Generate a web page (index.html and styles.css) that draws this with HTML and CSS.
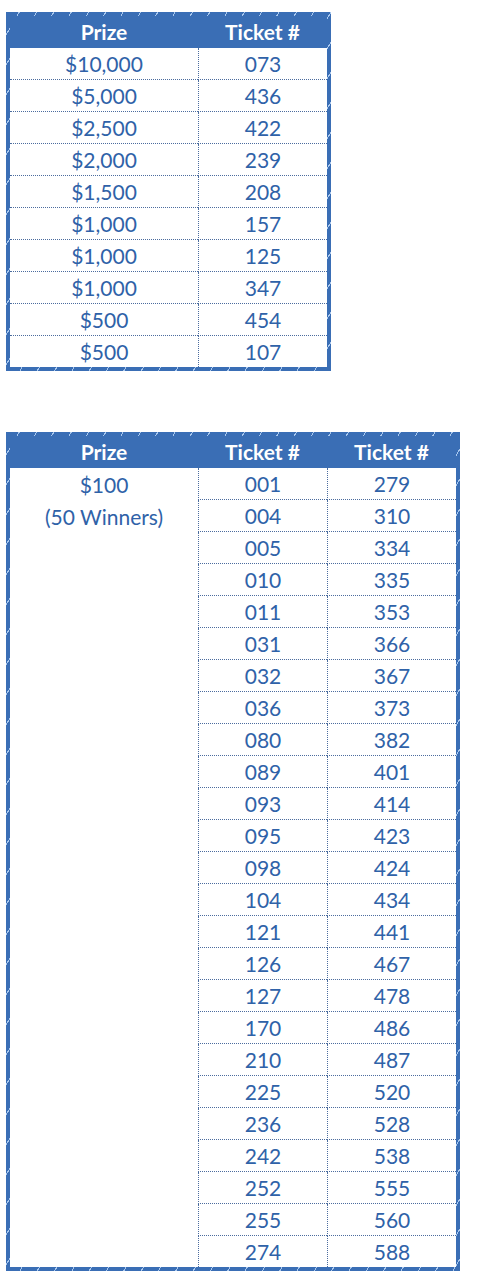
FILE: index.html
```html
<!DOCTYPE html>
<html>
<head>
<meta charset="utf-8">
<link rel="stylesheet" href="styles.css">
</head>
<body>
<div class="page">
  <table class="prizes top">
    <colgroup><col class="c-prize"><col class="c-ticket"></colgroup>
    <thead>
      <tr><th>Prize</th><th>Ticket #</th></tr>
    </thead>
    <tbody>
      <tr><td>$10,000</td><td>073</td></tr>
      <tr><td>$5,000</td><td>436</td></tr>
      <tr><td>$2,500</td><td>422</td></tr>
      <tr><td>$2,000</td><td>239</td></tr>
      <tr><td>$1,500</td><td>208</td></tr>
      <tr><td>$1,000</td><td>157</td></tr>
      <tr><td>$1,000</td><td>125</td></tr>
      <tr><td>$1,000</td><td>347</td></tr>
      <tr><td>$500</td><td>454</td></tr>
      <tr><td>$500</td><td>107</td></tr>
    </tbody>
  </table>

  <table class="prizes bottom">
    <colgroup><col class="c-prize"><col class="c-ticket"><col class="c-ticket"></colgroup>
    <thead>
      <tr><th>Prize</th><th>Ticket #</th><th>Ticket #</th></tr>
    </thead>
    <tbody>
      <tr><td class="p">$100</td><td>001</td><td>279</td></tr>
      <tr><td class="p">(50 Winners)</td><td>004</td><td>310</td></tr>
      <tr><td class="p"></td><td>005</td><td>334</td></tr>
      <tr><td class="p"></td><td>010</td><td>335</td></tr>
      <tr><td class="p"></td><td>011</td><td>353</td></tr>
      <tr><td class="p"></td><td>031</td><td>366</td></tr>
      <tr><td class="p"></td><td>032</td><td>367</td></tr>
      <tr><td class="p"></td><td>036</td><td>373</td></tr>
      <tr><td class="p"></td><td>080</td><td>382</td></tr>
      <tr><td class="p"></td><td>089</td><td>401</td></tr>
      <tr><td class="p"></td><td>093</td><td>414</td></tr>
      <tr><td class="p"></td><td>095</td><td>423</td></tr>
      <tr><td class="p"></td><td>098</td><td>424</td></tr>
      <tr><td class="p"></td><td>104</td><td>434</td></tr>
      <tr><td class="p"></td><td>121</td><td>441</td></tr>
      <tr><td class="p"></td><td>126</td><td>467</td></tr>
      <tr><td class="p"></td><td>127</td><td>478</td></tr>
      <tr><td class="p"></td><td>170</td><td>486</td></tr>
      <tr><td class="p"></td><td>210</td><td>487</td></tr>
      <tr><td class="p"></td><td>225</td><td>520</td></tr>
      <tr><td class="p"></td><td>236</td><td>528</td></tr>
      <tr><td class="p"></td><td>242</td><td>538</td></tr>
      <tr><td class="p"></td><td>252</td><td>555</td></tr>
      <tr><td class="p"></td><td>255</td><td>560</td></tr>
      <tr><td class="p"></td><td>274</td><td>588</td></tr>
    </tbody>
  </table>
</div>
</body>
</html>
```

FILE: styles.css
```css
html, body {
  margin: 0;
  padding: 0;
  background: #ffffff;
}

.page {
  padding: 12px 0 0 6px;
  display: flex;
  flex-direction: column;
  align-items: flex-start;
  gap: 61px;
  font-family: Lato, "Liberation Sans", sans-serif;
}

.prizes {
  border-collapse: separate;
  border-spacing: 0;
  border: 4px solid #3a6eb5;
  border-image-source: repeating-linear-gradient(120deg, #3a6eb5 0 11px, #a9c8ee 11px 12px, #3a6eb5 12px 15px);
  border-image-slice: 4;
  border-image-repeat: stretch;
  table-layout: fixed;
}

.top { width: 324px; }
.bottom { width: 454px; }

.c-prize { width: 188px; }
.c-ticket { width: 129px; }

.prizes th {
  background: #3a6eb5;
  color: #ffffff;
  font-weight: 700;
  font-size: 21px;
  height: 32px;
  padding: 0;
  text-align: center;
  vertical-align: middle;
  line-height: 32px;
}

.prizes td {
  height: 31px;
  padding: 0;
  text-align: center;
  vertical-align: middle;
  line-height: 31px;
  font-size: 21px;
  color: #2f62a8;
  border-bottom: 1px dotted #4b6c9e;
  border-left: 1px dotted #4b6c9e;
}

.prizes td:first-child {
  border-left: none;
}

.prizes tbody tr:last-child td {
  border-bottom: none;
}

.prizes td.p {
  border-bottom: none;
  height: 32px;
}

.prizes tbody tr:last-child td.p {
  height: 31px;
}
```
